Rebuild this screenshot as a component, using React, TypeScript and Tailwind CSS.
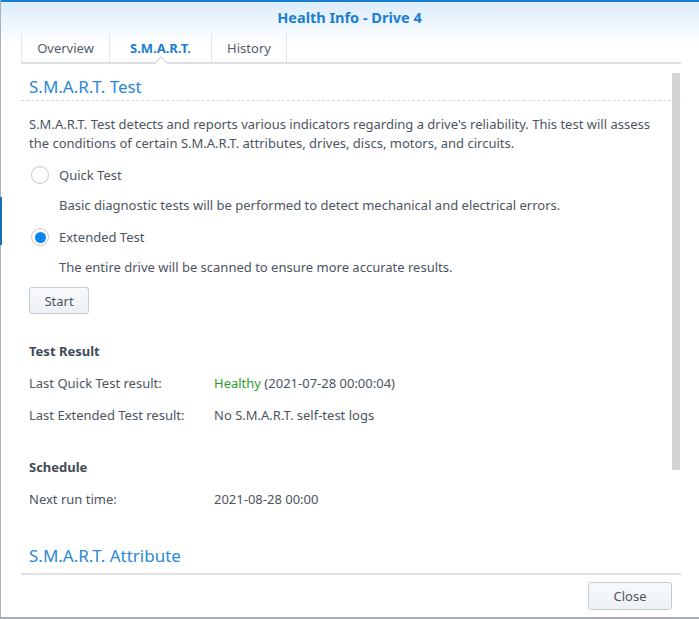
import React from 'react'

const font = { fontFamily: '"Noto Sans", "DejaVu Sans", sans-serif' }

function Radio({ checked }: { checked?: boolean }) {
  return (
    <span className="flex h-[18px] w-[18px] shrink-0 items-center justify-center rounded-full border border-[#c4c9ce] bg-white">
      {checked && <span className="h-[11px] w-[11px] rounded-full bg-[#0a86ea]" />}
    </span>
  )
}

export default function App() {
  return (
    <div className="relative h-[619px] w-[699px] overflow-hidden bg-white text-[13px] leading-[16px] text-[#4c5561]" style={font}>
      {/* window edges */}
      <div className="absolute left-0 top-0 h-full w-px bg-[#a9b0b6]" />
      <div className="absolute left-0 top-[197px] h-[48px] w-[2px] bg-[#1c6fb0]" />

      <div className="flex h-full flex-col border-b-2 border-[#a9adb2] bg-gradient-to-b from-[#d9ebfb] from-0% to-white to-[7%]">
        {/* title bar */}
        <div className="h-[33px] shrink-0 border-t-2 border-[#1a7fd0] pt-[6px] text-center text-[14.5px] font-bold leading-[18px] text-[#1a7fd1]">
          Health Info - Drive 4
        </div>

        {/* tabs */}
        <div className="ml-[21px] mr-[18px] flex h-[31px] shrink-0 border-b-2 border-[#dcdfe2]">
          <div className="flex w-[89px] items-center justify-center border-l border-r border-[#e3e5e8] text-[#525c66]">Overview</div>
          <div className="relative flex w-[102px] items-center justify-center border-r border-[#e3e5e8] font-bold text-[#1a7fd1]">
            S.M.A.R.T.
            <span className="absolute bottom-[-2px] left-1/2 h-0 w-0 -translate-x-1/2 border-x-[8px] border-b-[8px] border-x-transparent border-b-[#dcdfe2]" />
            <span className="absolute bottom-[-2px] left-1/2 h-0 w-0 -translate-x-1/2 border-x-[6px] border-b-[6px] border-x-transparent border-b-white" />
          </div>
          <div className="flex w-[75px] items-center justify-center border-r border-[#e3e5e8] text-[#525c66]">History</div>
        </div>

        {/* content */}
        <div className="relative ml-[21px] mr-[18px] flex-1 overflow-hidden bg-white">
          <div className="absolute right-[1px] top-[9px] h-[397px] w-[8px] bg-[#d3d4d6]" />

          <div className="border-b border-dashed border-[#d8dadd] px-[8px] pb-[3px] pt-[13px] text-[17px] leading-[20px] text-[#2a88d6]">S.M.A.R.T. Test</div>

          <div className="pl-[8px] pr-[20px]">
            <p className="mt-[14px] leading-[19px]">
              S.M.A.R.T. Test detects and reports various indicators regarding a drive's reliability. This test will assess the conditions of certain S.M.A.R.T. attributes, drives, discs, motors, and circuits.
            </p>

            <div className="mt-[13px] flex items-center gap-[10px] pl-[2px]">
              <Radio />
              <span>Quick Test</span>
            </div>
            <div className="mt-[13px] pl-[30px]">Basic diagnostic tests will be performed to detect mechanical and electrical errors.</div>

            <div className="mt-[15px] flex items-center gap-[10px] pl-[2px]">
              <Radio checked />
              <span>Extended Test</span>
            </div>
            <div className="mt-[13px] pl-[30px]">The entire drive will be scanned to ensure more accurate results.</div>

            <button className="mt-[12px] h-[27px] w-[60px] rounded-[3px] border border-[#c3cbd3] bg-gradient-to-b from-[#f8fafc] to-[#edf1f5] text-[#4c5561]">
              Start
            </button>

            <div className="mt-[29px] font-bold text-[#414b56]">Test Result</div>
            <div className="mt-[16px] flex">
              <span className="w-[185px]">Last Quick Test result:</span>
              <span><span className="text-[#2f9a2c]">Healthy</span> (2021-07-28 00:00:04)</span>
            </div>
            <div className="mt-[16px] flex">
              <span className="w-[185px]">Last Extended Test result:</span>
              <span>No S.M.A.R.T. self-test logs</span>
            </div>

            <div className="mt-[36px] font-bold text-[#414b56]">Schedule</div>
            <div className="mt-[16px] flex">
              <span className="w-[185px]">Next run time:</span>
              <span>2021-08-28 00:00</span>
            </div>
          </div>

          <div className="mt-[39px] px-[8px] text-[17px] leading-[20px] text-[#2a88d6]">S.M.A.R.T. Attribute</div>
        </div>

        {/* footer */}
        <div className="ml-[21px] mr-[18px] flex h-[44px] shrink-0 items-start justify-end border-t-2 border-[#e1e3e6] bg-white pr-[9px] pt-[7px]">
          <button className="h-[28px] w-[84px] rounded-[3px] border border-[#c3cbd3] bg-gradient-to-b from-[#f8fafc] to-[#edf1f5] text-[#4c5561]">
            Close
          </button>
        </div>
      </div>
    </div>
  )
}
